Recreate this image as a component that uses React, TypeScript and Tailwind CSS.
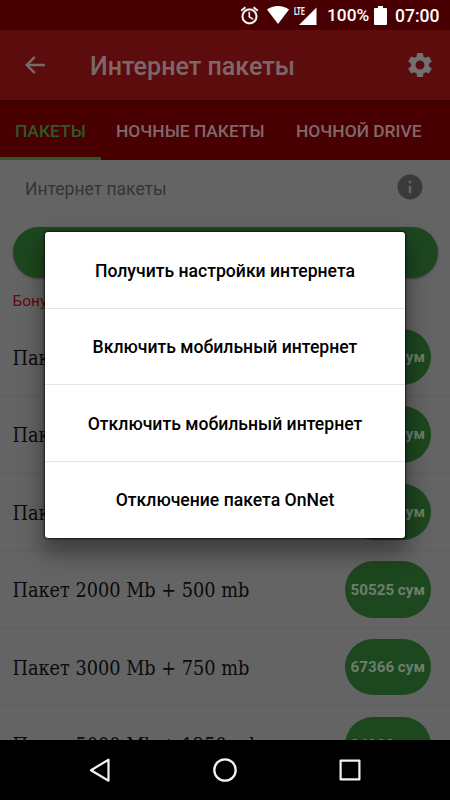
import React from "react";

const rows = [
  { name: "Пакет 300 Mb + 75 mb", price: "16841 сум" },
  { name: "Пакет 500 Mb + 125 mb", price: "25262 сум" },
  { name: "Пакет 1000 Mb + 250 mb", price: "33683 сум" },
  { name: "Пакет 2000 Mb + 500 mb", price: "50525 сум" },
  { name: "Пакет 3000 Mb + 750 mb", price: "67366 сум" },
  { name: "Пакет 5000 Mb + 1250 mb", price: "84208 сум" },
];

const actions = [
  "Получить настройки интернета",
  "Включить мобильный интернет",
  "Отключить мобильный интернет",
  "Отключение пакета OnNet",
];

function StatusBar() {
  return (
    <div className="flex h-[30px] shrink-0 items-center bg-[#480002] pl-[239px] text-white">
      <svg width="21" height="21" viewBox="0 0 24 24" fill="currentColor" stroke="currentColor" strokeWidth="0.3">
        <path d="M22 5.72l-4.6-3.86-1.29 1.53 4.6 3.86L22 5.72zM7.88 3.39L6.6 1.86 2 5.71l1.29 1.53 4.59-3.85zM12.5 8H11v6l4.75 2.85.75-1.23-4-2.37V8zM12 4a9 9 0 1 0 0 18 9 9 0 0 0 0-18zm0 16a7 7 0 1 1 0-14 7 7 0 0 1 0 14z" />
      </svg>
      <svg className="ml-[7px]" width="22" height="18" viewBox="0 0 22 18" fill="currentColor">
        <path d="M0 3.6C3 1.3 7 0 11 0s8 1.3 11 3.6L11 18z" />
      </svg>
      <div className="ml-[5px] flex h-[19px] w-[23px] items-start">
        <span className="mt-[1px] w-[11px] shrink-0 origin-top-left scale-x-[0.58] text-[11.3px] leading-[9px] font-bold">LTE</span>
        <svg className="-ml-[6px] mt-[1px] shrink-0" width="18" height="18" viewBox="0 0 18 18" fill="currentColor">
          <path d="M17.5 0.5V18H0z" />
        </svg>
      </div>
      <span className="ml-[10px] w-[43px] pt-[2px] text-[17.3px] font-medium whitespace-nowrap">100%</span>
      <svg className="ml-[4px]" width="13" height="19" viewBox="0 0 13 19" fill="currentColor">
        <path d="M4 0h5v2h3q1 0 1 1v15q0 1-1 1H1q-1 0-1-1V3q0-1 1-1h3z" />
      </svg>
      <span className="ml-[8px] pt-[2px] text-[17.5px] font-medium whitespace-nowrap">07:00</span>
    </div>
  );
}

function Header() {
  return (
    <header className="flex h-[70px] shrink-0 items-center bg-[#5d0c0e] pl-[22px] text-[#7d6869]">
      <svg width="26" height="26" viewBox="0 0 24 24" fill="currentColor" stroke="currentColor" strokeWidth="0.4">
        <path d="M21 11H6.83l5.58-5.59L11 4l-8 8 8 8 1.41-1.41L6.83 13H21z" />
      </svg>
      <h1 className="ml-[42px] w-[310px] pt-[3px] text-[25.1px] font-medium whitespace-nowrap">Интернет пакеты</h1>
      <svg className="mr-[15px] ml-auto shrink-0" width="30" height="30" viewBox="0 0 24 24" fill="#727071">
        <path d="M19.14 12.94c.04-.3.06-.61.06-.94 0-.32-.02-.64-.07-.94l2.03-1.58a.49.49 0 0 0 .12-.61l-1.92-3.32a.488.488 0 0 0-.59-.22l-2.39.96c-.5-.38-1.03-.7-1.62-.94l-.36-2.54a.484.484 0 0 0-.48-.41h-3.84c-.24 0-.43.17-.47.41l-.36 2.54c-.59.24-1.13.57-1.62.94l-2.39-.96c-.22-.08-.47 0-.59.22L2.74 8.87c-.12.21-.08.47.12.61l2.03 1.58c-.05.3-.09.63-.09.94s.02.64.07.94l-2.03 1.58a.49.49 0 0 0-.12.61l1.92 3.32c.12.22.37.29.59.22l2.39-.96c.5.38 1.03.7 1.62.94l.36 2.54c.05.24.24.41.48.41h3.84c.24 0 .44-.17.47-.41l.36-2.54c.59-.24 1.13-.56 1.62-.94l2.39.96c.22.08.47 0 .59-.22l1.92-3.32c.12-.22.07-.47-.12-.61l-2.01-1.58zM12 15.6A3.61 3.61 0 0 1 8.4 12c0-1.98 1.62-3.6 3.6-3.6s3.6 1.62 3.6 3.6-1.62 3.6-3.6 3.6z" />
      </svg>
    </header>
  );
}

function Tabs() {
  return (
    <nav className="flex h-[60px] shrink-0 bg-[#480002] bg-linear-to-b from-[#3b0002] to-[#480002] to-10% text-[17.4px] font-medium whitespace-nowrap text-[#80696a]">
      <div className="flex w-[101px] items-center border-b-[3px] border-[#2b5a26] pt-[5px] pl-[15px] text-[#2e5a29]">ПАКЕТЫ</div>
      <div className="flex w-[180px] items-center pt-[2px] pl-[15px]">НОЧНЫЕ ПАКЕТЫ</div>
      <div className="flex items-center pt-[2px] pl-[15px]">НОЧНОЙ DRIVE</div>
    </nav>
  );
}

function Dialog() {
  return (
    <div className="absolute top-[232px] left-[45px] flex h-[305.5px] w-[360px] flex-col rounded-[3px] bg-white shadow-[0_12px_22px_3px_rgba(0,0,0,0.4),0_0_2px_1px_rgba(0,0,0,0.6)]">
      {actions.map((label) => (
        <button
          key={label}
          className="flex flex-1 items-center justify-center border-b border-[#e4e4e4] pt-[2px] text-[17.6px] font-medium whitespace-nowrap text-black last:border-b-0"
        >
          {label}
        </button>
      ))}
    </div>
  );
}

function NavBar() {
  return (
    <footer className="flex h-[60px] shrink-0 items-center justify-between bg-black px-[85px]">
      <svg width="30" height="30" viewBox="0 0 30 30" fill="none" stroke="#f2f2f2" strokeWidth="2.2" strokeLinejoin="round">
        <path d="M6 15.3L23.5 4.7v21z" />
      </svg>
      <svg width="30" height="30" viewBox="0 0 30 30" fill="none" stroke="#f2f2f2" strokeWidth="2.3">
        <circle cx="15" cy="15" r="10.7" />
      </svg>
      <svg width="30" height="30" viewBox="0 0 30 30" fill="none" stroke="#f2f2f2" strokeWidth="2.2" strokeLinejoin="round">
        <rect x="5.6" y="5.6" width="18.8" height="18.8" />
      </svg>
    </footer>
  );
}

export default function App() {
  return (
    <div className="relative flex h-[800px] w-[450px] flex-col overflow-hidden bg-[#646464] font-['Roboto','Noto_Sans',sans-serif]">
      <StatusBar />
      <Header />
      <Tabs />
      <main className="flex min-h-0 flex-1 flex-col overflow-hidden">
        <div className="flex h-[67px] shrink-0 items-start justify-between pt-[12px] pr-[25px] pl-[25px]">
          <span className="pt-[4px] text-[17.5px] leading-[26px] whitespace-nowrap text-[#343434]">Интернет пакеты</span>
          <svg width="30" height="30" viewBox="0 0 24 24" fill="#3a3a3a">
            <path d="M12 2a10 10 0 1 0 0 20 10 10 0 0 0 0-20zm1 15h-2v-6h2zm0-8h-2V7h2z" />
          </svg>
        </div>
        <div className="mx-[12.5px] h-[51px] shrink-0 rounded-full bg-[#1d471f] shadow-[0_1px_2px_rgba(0,0,0,0.3)]" />
        <div className="h-[40.5px] shrink-0 pt-[12px] pl-[12.5px] text-[15.5px] leading-[22px] whitespace-nowrap text-[#640a0a]">
          Бонусы
        </div>
        {rows.map((row) => (
          <div key={row.price} className="flex h-[77.6px] shrink-0 items-center justify-between border-b border-[#5d5d5d] pr-[19px] pl-[12.5px]">
            <span className="pt-[3px] font-['DejaVu_Serif_Condensed','DejaVu_Serif',serif] text-[19.7px] whitespace-nowrap text-[#0a0a0a]">{row.name}</span>
            <span className="flex h-[56.5px] w-[86.5px] items-center justify-center rounded-full bg-[#1d471f] pt-[1px] text-[15.2px] font-bold whitespace-nowrap text-[#6b7f6b]">
              {row.price}
            </span>
          </div>
        ))}
      </main>
      <NavBar />
      <Dialog />
    </div>
  );
}
